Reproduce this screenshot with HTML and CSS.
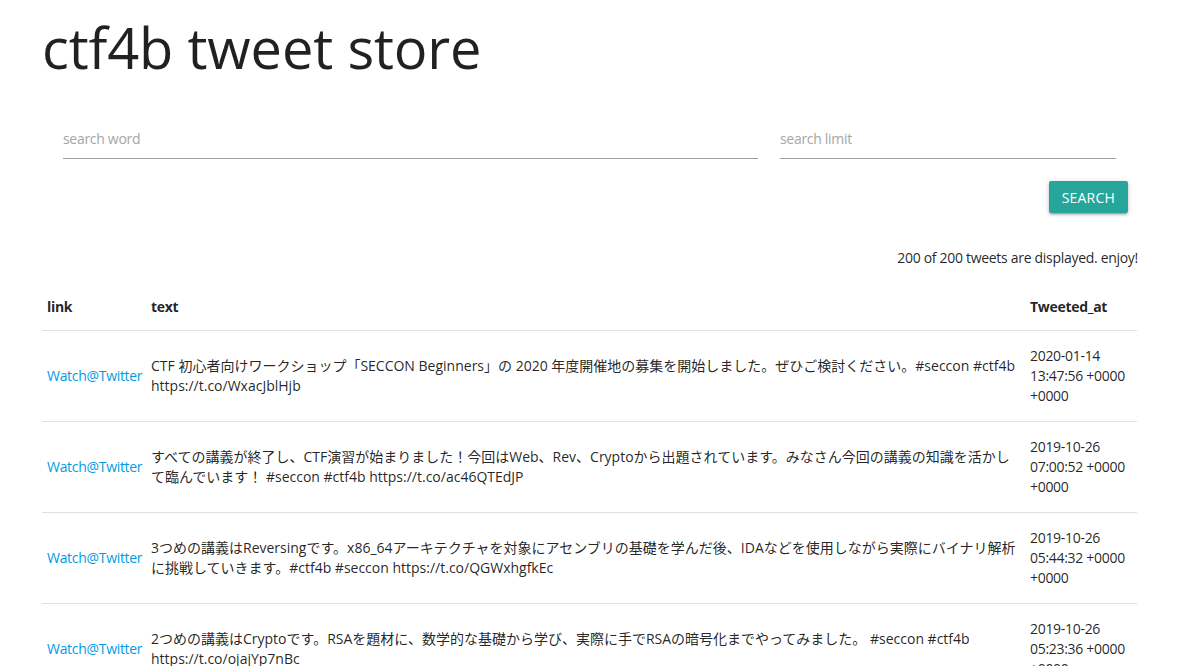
FILE: index.html
```html
<!DOCTYPE html>
<html lang="ja">
<head>
<meta charset="utf-8">
<title>ctf4b tweet store</title>
<link rel="stylesheet" href="styles.css">
</head>
<body>
<div class="container">
  <h1 class="title">ctf4b tweet store</h1>
  <form class="search-form">
    <div class="fields">
      <div class="field field-word"><input type="text" placeholder="search word"></div>
      <div class="field field-limit"><input type="text" placeholder="search limit"></div>
    </div>
    <div class="actions">
      <button type="button" class="btn">Search</button>
    </div>
  </form>
  <p class="count">200 of 200 tweets are displayed. enjoy!</p>
  <table class="tweets">
    <colgroup>
      <col class="col-link">
      <col class="col-text">
      <col class="col-date">
    </colgroup>
    <thead>
      <tr><th>link</th><th>text</th><th>Tweeted_at</th></tr>
    </thead>
    <tbody>
      <tr>
        <td><a href="#">Watch@Twitter</a></td>
        <td class="tweet-text">CTF 初心者向けワークショップ「SECCON Beginners」の 2020 年度開催地の募集を開始しました。ぜひご検討ください。#seccon #ctf4b https://t.co/WxacJblHjb</td>
        <td>2020-01-14 13:47:56 +0000 +0000</td>
      </tr>
      <tr>
        <td><a href="#">Watch@Twitter</a></td>
        <td class="tweet-text">すべての講義が終了し、CTF演習が始まりました！今回はWeb、Rev、Cryptoから出題されています。みなさん今回の講義の知識を活かして臨んでいます！ #seccon #ctf4b https://t.co/ac46QTEdJP</td>
        <td>2019-10-26 07:00:52 +0000 +0000</td>
      </tr>
      <tr>
        <td><a href="#">Watch@Twitter</a></td>
        <td class="tweet-text">3つめの講義はReversingです。x86_64アーキテクチャを対象にアセンブリの基礎を学んだ後、IDAなどを使用しながら実際にバイナリ解析に挑戦していきます。#ctf4b #seccon https://t.co/QGWxhgfkEc</td>
        <td>2019-10-26 05:44:32 +0000 +0000</td>
      </tr>
      <tr>
        <td><a href="#">Watch@Twitter</a></td>
        <td class="tweet-text">2つめの講義はCryptoです。RSAを題材に、数学的な基礎から学び、実際に手でRSAの暗号化までやってみました。 #seccon #ctf4b https://t.co/ojajYp7nBc</td>
        <td>2019-10-26 05:23:36 +0000 +0000</td>
      </tr>
    </tbody>
  </table>
</div>
</body>
</html>
```

FILE: styles.css
```css
html, body {
  margin: 0;
  padding: 0;
  background: #fff;
}
body {
  font-family: "Open Sans", "Noto Sans CJK JP", sans-serif;
  font-size: 14px;
  line-height: 1.5;
  letter-spacing: -0.3px;
  color: rgba(0, 0, 0, 0.87);
}
.container {
  width: 1095px;
  margin-left: 42px;
}
.title {
  margin: 9px 0 0 0;
  font-size: 56px;
  font-weight: 400;
  line-height: 76px;
  letter-spacing: -0.15px;
}
.search-form {
  margin-top: 28px;
}
.fields {
  display: flex;
  gap: 22px;
  padding-left: 21px;
}
.field input {
  display: block;
  box-sizing: border-box;
  width: 100%;
  height: 46px;
  border: none;
  border-bottom: 1px solid #9e9e9e;
  outline: none;
  padding: 6px 0 0 0;
  font: inherit;
  font-size: 14px;
  letter-spacing: -0.3px;
  background: transparent;
}
.field input::placeholder {
  color: #a6a6a6;
}
.field-word { width: 695px; }
.field-limit { width: 336px; }
.actions {
  display: flex;
  justify-content: flex-end;
  padding-right: 9px;
  margin-top: 22px;
}
.btn {
  height: 32px;
  padding: 0 13px;
  border: none;
  border-radius: 2px;
  background: #26a69a;
  color: #fff;
  font: inherit;
  font-size: 14px;
  text-transform: uppercase;
  letter-spacing: 0.2px;
  box-shadow: 0 2px 2px 0 rgba(0,0,0,.14), 0 3px 1px -2px rgba(0,0,0,.12), 0 1px 5px 0 rgba(0,0,0,.2);
}
.count {
  margin: 34px -1px 0 0;
  text-align: right;
  line-height: 21px;
}
.tweets {
  width: 100%;
  table-layout: fixed;
  border-collapse: collapse;
  margin-top: 11px;
}
.col-link { width: 104px; }
.col-date { width: 112px; }
.tweets th {
  text-align: left;
  font-weight: 700;
  padding: 17px 5px 13px;
  line-height: 21px;
  vertical-align: middle;
}
.tweets thead tr,
.tweets tbody tr {
  border-bottom: 1px solid rgba(0, 0, 0, 0.12);
}
.tweets td {
  padding: 15px 5px;
  line-height: 20px;
  vertical-align: middle;
}
.tweets td.tweet-text {
  letter-spacing: 0;
}
.tweets a {
  color: #039be5;
  text-decoration: none;
  white-space: nowrap;
}
```
